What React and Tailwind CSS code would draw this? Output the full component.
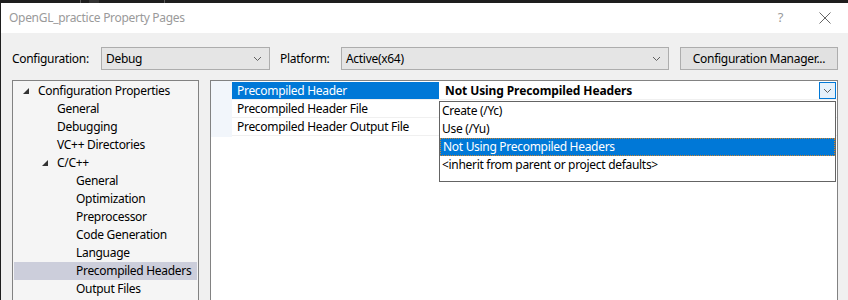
import React from "react";

const font = { fontFamily: '"Noto Sans", "Liberation Sans", sans-serif' };

function Chevron({ className = "" }) {
  return (
    <svg width="9" height="6" viewBox="0 0 9 6" className={className}>
      <polyline points="1,1 4.5,4.5 8,1" fill="none" stroke="#606060" strokeWidth="1" />
    </svg>
  );
}

function Triangle() {
  return (
    <svg width="6" height="6" viewBox="0 0 6 6">
      <polygon points="6,0 6,6 0,6" fill="#333" />
    </svg>
  );
}

const tree = [
  { label: "Configuration Properties", level: 0, open: true },
  { label: "General", level: 1 },
  { label: "Debugging", level: 1 },
  { label: "VC++ Directories", level: 1 },
  { label: "C/C++", level: 1, open: true },
  { label: "General", level: 2 },
  { label: "Optimization", level: 2 },
  { label: "Preprocessor", level: 2 },
  { label: "Code Generation", level: 2 },
  { label: "Language", level: 2 },
  { label: "Precompiled Headers", level: 2, selected: true },
  { label: "Output Files", level: 2 },
];

const indent = ["pl-[9px]", "pl-[28px]", "pl-[47px]"];

const options = [
  "Create (/Yc)",
  "Use (/Yu)",
  "Not Using Precompiled Headers",
  "<inherit from parent or project defaults>",
];

export default function App() {
  return (
    <div
      className="w-[848px] h-[300px] overflow-hidden bg-[#1e1e1e] text-[12px] tracking-[-0.3px] text-black whitespace-nowrap"
      style={font}
    >
      {/* bit of the editor behind the dialog */}
      <div className="h-[3px] flex">
        <div className="w-[80px]" />
        <div className="w-[1px] bg-[#5a5a5a]" />
        <div className="w-[8px]" />
        <div className="w-[10px] bg-[#333]" />
        <div className="w-[65px]" />
        <div className="w-[1px] bg-[#5a5a5a]" />
      </div>

      <div className="ml-[1px] h-[297px] flex flex-col bg-[#f0f0f0]">
        {/* title bar */}
        <div className="h-[30px] bg-white flex items-center pl-[8px] pr-[17px] text-[#9a9a9a] shrink-0">
          <span>OpenGL_practice Property Pages</span>
          <span className="ml-auto text-[13px]">?</span>
          <svg width="12" height="12" viewBox="0 0 12 12" className="ml-[36px]">
            <path d="M0.5 0.5 L11.5 11.5 M11.5 0.5 L0.5 11.5" stroke="#666" strokeWidth="1" />
          </svg>
        </div>

        {/* configuration row */}
        <div className="flex items-center h-[23px] mt-[14px] pl-[11px] shrink-0">
          <span className="w-[89px]">Configuration:</span>
          <div className="w-[169px] h-[23px] border border-[#adadad] bg-[#e5e5e5] flex items-center pl-[4px] pr-[7px]">
            <span>Debug</span>
            <Chevron className="ml-auto" />
          </div>
          <span className="ml-[10px] w-[61px]">Platform:</span>
          <div className="w-[328px] h-[23px] border border-[#adadad] bg-[#e5e5e5] flex items-center pl-[4px] pr-[7px]">
            <span>Active(x64)</span>
            <Chevron className="ml-auto" />
          </div>
          <div className="ml-[11px] w-[158px] h-[23px] border border-[#adadad] bg-[#e1e1e1] flex items-center justify-center">
            Configuration Manager...
          </div>
        </div>

        {/* panels */}
        <div className="flex mt-[10px] pl-[11px] flex-1 min-h-0">
          <div className="w-[187px] border border-[#828282] border-b-0 bg-[#f5f5f5] pt-[1px] px-[1px]">
            {tree.map((t, i) => (
              <div
                key={i}
                className={`h-[18px] flex items-center ${indent[t.level]} ${t.selected ? "bg-[#cccedb]" : ""}`}
              >
                <span className="w-[15px] flex items-center">{t.open && <Triangle />}</span>
                <span>{t.label}</span>
              </div>
            ))}
          </div>

          <div className="relative ml-[11px] w-[628px] border border-[#828282] border-b-0 bg-white">
            <div className="flex h-[56px]">
              <div className="w-[21px] bg-[#f2f6fb]" />
              <div className="w-[207px] pt-[1px] flex flex-col">
                <div className="h-[18px] border-b border-[#f0f0f0] bg-[#0078d7] text-white flex items-center pl-[5px]">
                  Precompiled Header
                </div>
                <div className="h-[18px] border-b border-[#f0f0f0] flex items-center pl-[5px]">
                  Precompiled Header File
                </div>
                <div className="h-[18px] border-b border-[#f0f0f0] flex items-center pl-[5px]">
                  Precompiled Header Output File
                </div>
              </div>
              <div className="flex-1 pt-[1px] flex flex-col">
                <div className="h-[18px] border-b border-[#f0f0f0] flex items-center pl-[6px] pr-[1px] font-bold tracking-[-0.1px]">
                  <span>Not Using Precompiled Headers</span>
                  <div className="ml-auto w-[17px] h-[17px] border border-[#0078d7] bg-[#e5f1fb] flex items-center justify-center">
                    <Chevron />
                  </div>
                </div>
                <div className="h-[18px] border-b border-[#f0f0f0]" />
                <div className="h-[18px] border-b border-[#f0f0f0]" />
              </div>
            </div>

            {/* open dropdown */}
            <div className="absolute left-[228px] top-[20px] w-[397px] h-[81px] border border-[#646464] bg-white">
              {options.map((o, i) => (
                <div
                  key={i}
                  className={`h-[18px] flex items-center pl-[2px] ${
                    i === 2 ? "bg-[#0078d7] text-white border border-dotted border-[#d0842c]" : ""
                  }`}
                >
                  {o}
                </div>
              ))}
            </div>
          </div>
        </div>
      </div>
    </div>
  );
}
